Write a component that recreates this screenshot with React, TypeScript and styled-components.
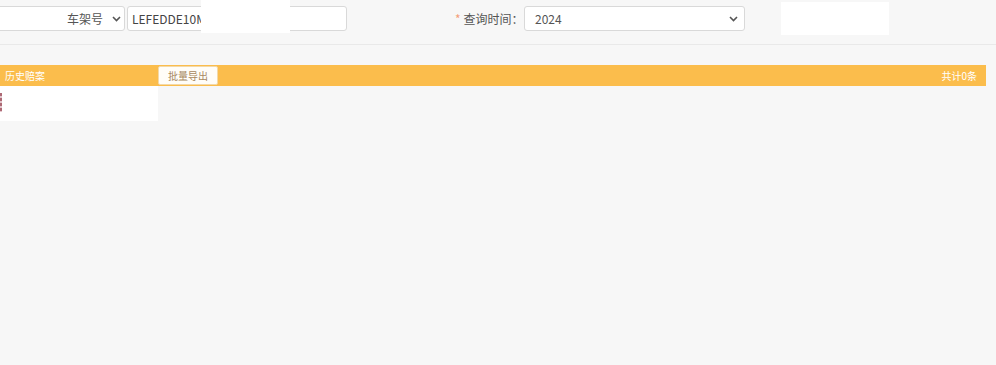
import React from "react";
import styled, { createGlobalStyle } from "styled-components";

const Global = createGlobalStyle`
  html, body { margin: 0; padding: 0; background: #f7f7f7; }
  body { font-family: "Noto Sans CJK SC", "Open Sans", sans-serif; color: #555; }
`;

const Page = styled.div`
  width: 996px;
  height: 365px;
  background: #f7f7f7;
  overflow: hidden;
  position: relative;
`;

const FormRow = styled.div`
  height: 45px;
  border-bottom: 1px solid #e9e9e9;
  display: flex;
  align-items: flex-start;
  padding-top: 6px;
  box-sizing: border-box;
  position: relative;
`;

const FakeSelect = styled.div<{ $w: number; $align?: string; $ml?: number }>`
  width: ${(p) => p.$w}px;
  margin-left: ${(p) => p.$ml ?? 0}px;
  height: 25px;
  box-sizing: border-box;
  border: 1px solid #d9d9d9;
  border-radius: 3px;
  background: #fff;
  display: flex;
  align-items: center;
  justify-content: ${(p) => (p.$align === "right" ? "flex-end" : "space-between")};
  padding: ${(p) => (p.$align === "right" ? "0 3px 0 10px" : "0 6px 0 10px")};
  font-size: 12px;
  color: #555;
  gap: 9px;
`;

const Input = styled.div`
  width: 220px;
  height: 25px;
  margin-left: 2px;
  box-sizing: border-box;
  border: 1px solid #d9d9d9;
  border-radius: 3px;
  background: #fff;
  display: flex;
  align-items: center;
  padding-left: 4px;
  font-size: 12px;
  color: #444;
`;

const Label = styled.div`
  margin-left: 108px;
  width: 71px;
  height: 25px;
  display: flex;
  align-items: center;
  font-size: 12px;
  color: #555;
  white-space: nowrap;
`;

const Star = styled.span`
  color: #f4a07a;
  margin-right: 3px;
`;

const Mask = styled.div<{ $l: number; $t: number; $w: number; $h: number }>`
  position: absolute;
  left: ${(p) => p.$l}px;
  top: ${(p) => p.$t}px;
  width: ${(p) => p.$w}px;
  height: ${(p) => p.$h}px;
  background: #fff;
`;

const Bar = styled.div`
  margin-top: 20px;
  width: 986px;
  height: 21px;
  background: #fbbd4c;
  display: flex;
  align-items: center;
  font-size: 10px;
  color: #fff;
  box-sizing: border-box;
  padding: 0 9px 0 5px;
`;

const BarTitle = styled.span`
  width: 153px;
`;

const ExportBtn = styled.div`
  width: 60px;
  height: 19px;
  box-sizing: border-box;
  background: #fffdf8;
  border: 1px solid #f3d9a8;
  border-radius: 2px;
  color: #a7875f;
  font-size: 10px;
  display: flex;
  align-items: center;
  justify-content: center;
`;

const Count = styled.span`
  margin-left: auto;
`;

const WhitePanel = styled.div`
  width: 158px;
  height: 35px;
  background: #fff;
  position: relative;
`;

const RedMark = styled.div`
  position: absolute;
  left: 0;
  top: 7px;
  width: 2px;
  height: 19px;
  background: repeating-linear-gradient(#8a2a3a 0 3px, #d8b0b8 3px 5px);
  opacity: 0.7;
`;

const Chevron = () => (
  <svg width="9" height="6" viewBox="0 0 9 6">
    <path d="M1 1 L4.5 4.5 L8 1" fill="none" stroke="#555" strokeWidth="1.6" />
  </svg>
);

export default function App() {
  return (
    <Page>
      <Global />
      <FormRow>
        <FakeSelect $w={135} $ml={-10} $align="right">
          <span>车架号</span>
          <Chevron />
        </FakeSelect>
        <Input>LEFEDDE10M</Input>
        <Label>
          <Star>*</Star>查询时间：
        </Label>
        <FakeSelect $w={221} $ml={-2}>
          <span>2024</span>
          <Chevron />
        </FakeSelect>
        <Mask $l={201} $t={0} $w={89} $h={33} />
        <Mask $l={781} $t={2} $w={108} $h={33} />
      </FormRow>
      <Bar>
        <BarTitle>历史赔案</BarTitle>
        <ExportBtn>批量导出</ExportBtn>
        <Count>共计0条</Count>
      </Bar>
      <WhitePanel>
        <RedMark />
      </WhitePanel>
    </Page>
  );
}
